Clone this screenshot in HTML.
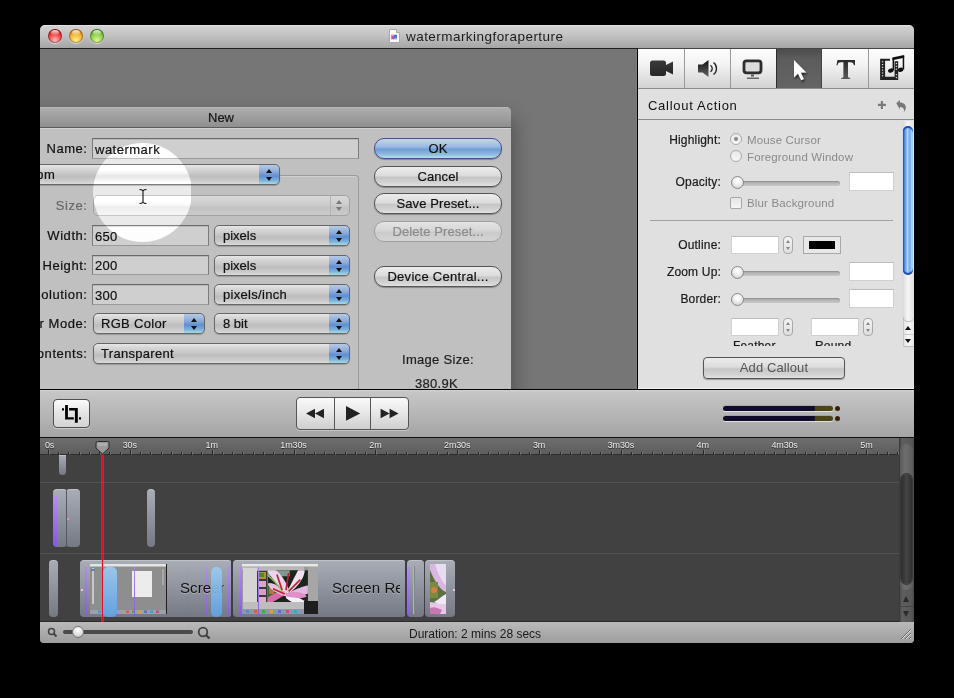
<!DOCTYPE html>
<html><head><meta charset="utf-8">
<style>
*{box-sizing:border-box;margin:0;padding:0}
html,body{width:954px;height:698px;overflow:hidden;background:#000;font-family:"Liberation Sans",sans-serif}
body{will-change:transform}
.a{position:absolute}
.t{position:absolute;white-space:nowrap;font-size:13px;color:#111;line-height:1}
.dl{letter-spacing:.55px}
.dlg .t,.dlg .btn{-webkit-text-stroke:.2px currentColor}
#win{position:absolute;left:40px;top:25px;width:874px;height:618px;border-radius:5px 5px 4px 4px;overflow:hidden;background:#777}
.tl{position:absolute;width:14px;height:14px;border-radius:50%;top:29px;box-shadow:inset 0 0 0 1px rgba(0,0,0,.28),0 1px 1px rgba(255,255,255,.5)}
.tl:after{content:"";position:absolute;left:3px;top:1px;width:8px;height:5px;border-radius:50%;background:linear-gradient(rgba(255,255,255,.85),rgba(255,255,255,.1))}
/* dialog */
.fld{position:absolute;background:#cfcfcf;border:1px solid #7b7b7b;border-top-color:#6a6a6a;border-bottom-color:#9a9a9a;box-shadow:inset 0 1px 0 #b8b8b8}
.pop{position:absolute;height:21px;border-radius:5px;border:1px solid #666;background:linear-gradient(#e6e6e6,#d6d6d6 20%,#c6c6c6 48%,#bcbcbc 58%,#cccccc 85%,#dadada);box-shadow:0 1px 1px rgba(0,0,0,.2);overflow:hidden}
.cap{position:absolute;right:-1px;top:-1px;width:21px;height:21px;border-radius:0 5px 5px 0;border:1px solid #34348a;border-left:0;border-bottom-color:#555;background:linear-gradient(#b6cae6,#8eacd8 35%,#5e8ed2 58%,#7eb2dc 82%,#a6dce2)}
.cap:before{content:"";position:absolute;left:6.5px;top:3.5px;border:3.5px solid transparent;border-bottom:4px solid #111;border-top:0}
.cap:after{content:"";position:absolute;left:6.5px;top:11.5px;border:3.5px solid transparent;border-top:4px solid #111;border-bottom:0}
.btn{position:absolute;height:21px;border-radius:10px;border:1px solid #555;background:linear-gradient(#ececec,#dcdcdc 45%,#c6c6c6 55%,#d4d4d4 85%,#e2e2e2);box-shadow:0 1px 1px rgba(0,0,0,.3);font-size:13px;text-align:center;line-height:19px;color:#111;letter-spacing:.1px;white-space:nowrap}
/* panel */
.lbl{position:absolute;white-space:nowrap;font-size:12px;font-weight:normal;color:#1a1a1a;-webkit-text-stroke:.2px #1a1a1a;text-align:right;line-height:1;letter-spacing:.18px}
.g{color:#8a8a8a}
.wf{position:absolute;background:#fff;border:1px solid #d0d0d0;border-top-color:#bdbdbd}
.sl{position:absolute;height:5px;border-radius:3px;background:linear-gradient(#a8a8a8,#c8c8c8);box-shadow:inset 0 1px 1px rgba(0,0,0,.15)}
.knob{position:absolute;width:13px;height:13px;border-radius:50%;background:radial-gradient(circle at 50% 35%,#fff 0,#f0f0f0 40%,#c8c8c8 100%);border:1px solid #8a8a8a}
.stp{position:absolute;width:10px;height:18px;border:1px solid #a8a8a8;border-radius:4px;background:linear-gradient(#f4f4f4,#dedede)}
.stp:before{content:"";position:absolute;left:2px;top:3px;border:2px solid transparent;border-bottom:3px solid #888;border-top:0}
.stp:after{content:"";position:absolute;left:2px;top:10px;border:2px solid transparent;border-top:3px solid #888;border-bottom:0}
.tab{position:absolute;top:49px;height:39px;background:linear-gradient(#fdfdfd,#f3f3f3 40%,#d2d2d2);border-right:1px solid #9a9a9a}
</style></head>
<body>
<div id="win"></div>

<!-- title bar -->
<div class="a" style="left:40px;top:25px;width:874px;height:23px;border-radius:5px 5px 0 0;background:linear-gradient(#ececec,#d2d2d2 5%,#c2c2c2 45%,#a5a5a5)"></div>
<div class="a" style="left:40px;top:48px;width:874px;height:1px;background:#202020"></div>
<div class="tl" style="left:48px;background:radial-gradient(circle at 50% 80%,#ffc0c0 0,#f04a4a 45%,#c01818 80%,#901010 100%)"></div>
<div class="tl" style="left:69px;background:radial-gradient(circle at 50% 80%,#fff090 0,#f4b030 50%,#d07010 80%,#a05000 100%)"></div>
<div class="tl" style="left:90px;background:radial-gradient(circle at 50% 80%,#e0f8a0 0,#88cc40 50%,#4a9a20 80%,#2a6a10 100%)"></div>
<svg class="a" style="left:388px;top:28px" width="13" height="16" viewBox="0 0 13 16"><path d="M1.5 1.5h7l3 3v10h-10z" fill="#fafafa" stroke="#a8a8a8"/><path d="M8.5 1.5v3h3" fill="#ddd" stroke="#a8a8a8"/><rect x="3" y="6.5" width="6" height="5" fill="#b8a8d8"/><rect x="3.5" y="8" width="3" height="3" fill="#d050a0"/><rect x="6" y="7" width="3" height="3" fill="#5070d0"/></svg>
<div class="t" style="left:406px;top:30px;font-size:13.5px;letter-spacing:.45px;color:#1c1c1c">watermarkingforaperture</div>

<!-- canvas -->
<div class="a" style="left:40px;top:49px;width:597px;height:340px;background:#767676;overflow:hidden">
  <!-- dialog shadow -->
  
  <!-- dialog -->
  <div class="a" style="left:-60px;top:58px;width:531px;height:360px;background:#c0c0c0;border-radius:0 5px 0 0;box-shadow:3px 10px 20px rgba(0,0,0,.32)">
    <div class="a" style="left:0;top:0;width:531px;height:20px;border-radius:0 5px 0 0;background:linear-gradient(#bababa,#acacac 8%,#8f8f8f)"></div>
    <div class="a" style="left:0;top:20px;width:531px;height:1px;background:#5c5c5c"></div>
    <div class="a" style="left:0;top:21px;width:531px;height:1px;background:#d2d2d2"></div>
  </div>
</div>

<!-- dialog contents (page coords), clipped to canvas -->
<div class="a" style="left:40px;top:49px;width:597px;height:340px;overflow:hidden">
 <div class="a dlg" style="left:-40px;top:-49px;width:954px;height:698px">
  <div class="t" style="left:208px;top:111px;color:#151515">New</div>
  <div class="t dl" style="right:866.5px;top:142px">Name:</div>
  <div class="fld" style="left:92px;top:138px;width:267px;height:21px"></div>
  <div class="t" style="left:95px;top:143px;letter-spacing:.5px">watermark</div>

  <!-- group box -->
  <div class="a" style="left:20px;top:175px;width:339px;height:240px;border:1px solid #9a9a9a;border-bottom:0;border-radius:4px 4px 0 0;box-shadow:inset 0 1px 0 #d0d0d0"></div>
  <div class="a" style="left:0px;top:176px;width:281px;height:1px;background:#c0c0c0"></div>
  <div class="pop" style="left:0px;top:164px;width:280px">
    <div class="t" style="left:7px;top:3px;letter-spacing:.4px">Custom</div>
    <div class="cap"></div>
  </div>

  <div class="t dl" style="right:866.5px;top:199px;color:#686868">Size:</div>
  <div class="a" style="left:93px;top:195px;width:257px;height:21px;border-radius:5px;border:1px solid #a2a2a2;background:linear-gradient(#d8d8d8,#cdcdcd 45%,#c2c2c2 58%,#cacaca)"></div>
  <div class="a" style="left:330px;top:196px;width:1px;height:19px;background:#b2b2b2"></div>
  <div class="a" style="left:335.5px;top:199.5px;border:3.5px solid transparent;border-bottom:4px solid #7a7a7a;border-top:0"></div>
  <div class="a" style="left:335.5px;top:207px;border:3.5px solid transparent;border-top:4px solid #7a7a7a;border-bottom:0"></div>

  <div class="t dl" style="right:866.5px;top:229px">Width:</div>
  <div class="fld" style="left:92px;top:225px;width:117px;height:21px"></div>
  <div class="t" style="left:95px;top:230px;letter-spacing:.3px">650</div>
  <div class="pop" style="left:214px;top:225px;width:136px"><div class="t" style="left:8px;top:3px">pixels</div><div class="cap"></div></div>

  <div class="t dl" style="right:866.5px;top:259px">Height:</div>
  <div class="fld" style="left:92px;top:255px;width:117px;height:20px"></div>
  <div class="t" style="left:95px;top:259px;letter-spacing:.3px">200</div>
  <div class="pop" style="left:214px;top:255px;width:136px"><div class="t" style="left:8px;top:3px">pixels</div><div class="cap"></div></div>

  <div class="t dl" style="right:866.5px;top:288px">Resolution:</div>
  <div class="fld" style="left:92px;top:284px;width:117px;height:21px"></div>
  <div class="t" style="left:95px;top:289px;letter-spacing:.3px">300</div>
  <div class="pop" style="left:214px;top:284px;width:136px"><div class="t" style="left:8px;top:3px;letter-spacing:.3px">pixels/inch</div><div class="cap"></div></div>

  <div class="t dl" style="right:866.5px;top:317px">Color Mode:</div>
  <div class="pop" style="left:93px;top:313px;width:112px"><div class="t" style="left:7px;top:3px;letter-spacing:.3px">RGB Color</div><div class="cap"></div></div>
  <div class="pop" style="left:214px;top:313px;width:136px"><div class="t" style="left:8px;top:3px">8 bit</div><div class="cap"></div></div>

  <div class="t dl" style="right:866.5px;top:347px">Background Contents:</div>
  <div class="pop" style="left:93px;top:343px;width:257px"><div class="t" style="left:7px;top:3px;letter-spacing:.3px">Transparent</div><div class="cap"></div></div>

  <!-- right buttons -->
  <div class="btn" style="left:374px;top:138px;width:128px;border-color:#4a4f86;background:linear-gradient(#c6d6ee,#9cb9e2 40%,#729ed6 55%,#8cb8e0 80%,#b4e0ee)">OK</div>
  <div class="btn" style="left:374px;top:166px;width:128px">Cancel</div>
  <div class="btn" style="left:374px;top:193px;width:128px">Save Preset...</div>
  <div class="btn" style="left:374px;top:221px;width:128px;color:#8c8c8c;border-color:#a0a0a0;box-shadow:none;background:linear-gradient(#e4e4e4,#d6d6d6 45%,#cbcbcb 55%,#d4d4d4)">Delete Preset...</div>
  <div class="btn" style="left:374px;top:266px;width:128px;letter-spacing:.3px">Device Central...</div>
  <div class="t" style="left:402px;top:353px;color:#222;letter-spacing:.3px">Image Size:</div>
  <div class="t" style="left:415px;top:377px;color:#222;letter-spacing:.3px">380.9K</div>

  <!-- mouse highlight -->
  <div class="a" style="left:93px;top:143px;width:99px;height:99px;border-radius:50%;backdrop-filter:brightness(1.22)"></div>
  <svg class="a" style="left:138px;top:188px" width="10" height="17" viewBox="0 0 10 17"><path d="M1.5 1.5c1.5 0 2.5.3 3.5 1.2 1-.9 2-1.2 3.5-1.2M5 2.7v11.6M1.5 15.5c1.5 0 2.5-.3 3.5-1.2 1 .9 2 1.2 3.5 1.2" fill="none" stroke="#111" stroke-width="1.1"/></svg>
 </div>
</div>

<!-- right panel -->
<div class="a" style="left:637px;top:49px;width:1px;height:340px;background:#000"></div>
<div class="a" style="left:636px;top:49px;width:1px;height:340px;background:#7e7e7e"></div>
<div class="a" style="left:638px;top:48px;width:276px;height:1px;background:#454545"></div>
<div class="a" style="left:638px;top:49px;width:276px;height:340px;background:#e0e0e0;overflow:hidden">
</div>
<div class="tab" style="left:638px;width:47px"></div>
<div class="tab" style="left:685px;width:46px"></div>
<div class="tab" style="left:731px;width:46px"></div>
<div class="tab" style="left:776px;width:46px;background:linear-gradient(#4c4c4c,#5c5c5c 25%,#646464);border-left:1px solid #2e2e2e;border-right:1px solid #444"></div>
<div class="tab" style="left:822px;width:47px"></div>
<div class="tab" style="left:869px;width:45px;border-right:0"></div>
<div class="a" style="left:638px;top:88px;width:276px;height:1px;background:#8c8c8c"></div>
<svg class="a" style="left:638px;top:49px" width="276" height="39" viewBox="0 0 276 39">
<defs>
<linearGradient id="dk" x1="0" y1="0" x2="0" y2="1"><stop offset="0" stop-color="#3a3a3a"/><stop offset="1" stop-color="#262626"/></linearGradient>
<linearGradient id="sp" x1="0" y1="0" x2="0" y2="1"><stop offset="0" stop-color="#111"/><stop offset="1" stop-color="#666"/></linearGradient>
<linearGradient id="tg" x1="0" y1="0" x2="0" y2="1"><stop offset="0" stop-color="#2a2a2a"/><stop offset="1" stop-color="#5a5a5a"/></linearGradient>
<filter id="sh" x="-50%" y="-50%" width="200%" height="200%"><feGaussianBlur in="SourceAlpha" stdDeviation="1"/><feOffset dx="1" dy="1.5"/><feComponentTransfer><feFuncA type="linear" slope=".7"/></feComponentTransfer><feMerge><feMergeNode/><feMergeNode in="SourceGraphic"/></feMerge></filter>
</defs>
<!-- camera -->
<rect x="12" y="11.5" width="16" height="15.5" rx="2.5" fill="url(#dk)"/>
<path d="M27 16.5L35 12.5v13L27 21.5z" fill="url(#dk)"/>
<!-- speaker -->
<path d="M60 15.5h4.5l6-4.5v17l-6-4.5H60z" fill="url(#sp)"/>
<path d="M72.5 16.2a4 4 0 0 1 0 6.6" fill="none" stroke="#222" stroke-width="1.3"/>
<path d="M75.5 13.5a7.5 7.5 0 0 1 0 12" fill="none" stroke="#222" stroke-width="1.3"/>
<!-- monitor -->
<rect x="106" y="11.8" width="17" height="12" rx="2.5" fill="#dcdcdc" stroke="#2e2e2e" stroke-width="2.8"/>
<path d="M113 25.5h3v2h-3z" fill="#555"/>
<path d="M109 28.5h12v1.5h-12z" fill="#666"/>
<!-- arrow -->
<path d="M156 11v17.5l4-4 3.2 6.8 2.6-1.2-3.1-6.6h5.6z" fill="#fff" filter="url(#sh)"/>
<!-- T -->
<path d="M199.5 11h17.5v5.2h-1.2c-.4-2.2-1-3-3.4-3h-2.4v14c0 1.2.4 1.6 2.2 1.7v1.1h-9v-1.1c1.8-.1 2.2-.5 2.2-1.7v-14h-2.4c-2.4 0-3 .8-3.4 3h-1.2z" fill="url(#tg)"/>
<!-- film/music -->
<path d="M242.1 9.8h9.9v2h-4.9v16h9.5V12.3h3.6v18.6h-18.1z" fill="#222"/>
<g fill="#e8e8e8"><rect x="243.9" y="12.2" width="1.3" height="1.1"/><rect x="243.9" y="15" width="1.3" height="1.1"/><rect x="243.9" y="17.8" width="1.3" height="1.1"/><rect x="243.9" y="20.6" width="1.3" height="1.1"/><rect x="243.9" y="23.4" width="1.3" height="1.1"/><rect x="243.9" y="26.2" width="1.3" height="1.1"/><rect x="257.8" y="14" width="1.3" height="1.1"/><rect x="257.8" y="16.8" width="1.3" height="1.1"/><rect x="257.8" y="19.6" width="1.3" height="1.1"/><rect x="257.8" y="25.2" width="1.3" height="1.1"/><rect x="257.8" y="28" width="1.3" height="1.1"/></g>
<path d="M254.3 8.6L266.2 6v2.7L254.3 11.3z" fill="#111"/>
<path d="M254.6 9.5h1.5v12h-1.5zM264.7 7h1.5v13.6h-1.5z" fill="#111"/>
<ellipse cx="252.7" cy="21.6" rx="2.7" ry="2.1" transform="rotate(-20 252.7 21.6)" fill="#111"/>
<ellipse cx="262.6" cy="20.8" rx="2.7" ry="2.1" transform="rotate(-20 262.6 20.8)" fill="#111"/>
</svg>

<!-- header -->
<div class="t" style="left:648px;top:99px;font-size:13px;letter-spacing:.72px;color:#111">Callout Action</div>
<div class="a" style="left:638px;top:119px;width:276px;height:1px;background:#8a8a8a"></div>
<svg class="a" style="left:870px;top:94px" width="42" height="22" viewBox="0 0 42 22"><path d="M7.9 10.9h8M11.9 6.9v8" stroke="#787878" stroke-width="2.1"/><path d="M26.3 9.3l3.6-3.2v2.3c3.5.1 6 1.9 6 5 0 2-1.2 3.4-1.8 4.4l-.3-.1c.5-1.5.3-3-.8-3.8-.9-.7-1.9-.9-3.1-.8v2.5z" fill="#787878"/></svg>


<div class="lbl" style="right:233px;top:134px">Highlight:</div>
<div class="a" style="left:730px;top:133px;width:12px;height:12px;border-radius:50%;border:1px solid #a8a8a8;background:linear-gradient(#e8e8e8,#f8f8f8)"><div class="a" style="left:3px;top:3px;width:4px;height:4px;border-radius:50%;background:#888"></div></div>
<div class="t g" style="left:747px;top:135px;font-size:11.5px;letter-spacing:.15px">Mouse Cursor</div>
<div class="a" style="left:730px;top:150px;width:12px;height:12px;border-radius:50%;border:1px solid #a8a8a8;background:linear-gradient(#e8e8e8,#f8f8f8)"></div>
<div class="t g" style="left:747px;top:152px;font-size:11.5px;letter-spacing:.15px">Foreground Window</div>

<div class="lbl" style="right:233px;top:176px">Opacity:</div>
<div class="sl" style="left:731px;top:181px;width:109px"></div>
<div class="knob" style="left:731px;top:176px"></div>
<div class="wf" style="left:849px;top:172px;width:45px;height:19px"></div>
<div class="a" style="left:730px;top:197px;width:12px;height:12px;border:1px solid #a8a8a8;border-radius:2px;background:linear-gradient(#e4e4e4,#f6f6f6)"></div>
<div class="t g" style="left:747px;top:198px;font-size:11.5px;letter-spacing:.15px">Blur Background</div>
<div class="a" style="left:650px;top:220px;width:243px;height:1px;background:#a0a0a0"></div>

<div class="lbl" style="right:233px;top:239px">Outline:</div>
<div class="wf" style="left:731px;top:236px;width:48px;height:18px"></div>
<div class="stp" style="left:783px;top:236px"></div>
<div class="a" style="left:803px;top:236px;width:38px;height:18px;border:1px solid #a8a8a8;background:#e8e8e8"><div class="a" style="left:5px;top:4px;width:26px;height:8px;background:#000"></div></div>

<div class="lbl" style="right:233px;top:266px">Zoom Up:</div>
<div class="sl" style="left:731px;top:271px;width:109px"></div>
<div class="knob" style="left:731px;top:266px"></div>
<div class="wf" style="left:849px;top:262px;width:45px;height:19px"></div>

<div class="lbl" style="right:233px;top:293px">Border:</div>
<div class="sl" style="left:731px;top:298px;width:109px"></div>
<div class="knob" style="left:731px;top:293px"></div>
<div class="wf" style="left:849px;top:289px;width:45px;height:19px"></div>

<div class="wf" style="left:731px;top:318px;width:48px;height:18px"></div>
<div class="stp" style="left:783px;top:318px"></div>
<div class="wf" style="left:811px;top:318px;width:48px;height:18px"></div>
<div class="stp" style="left:863px;top:318px"></div>
<div class="a" style="left:700px;top:330px;width:200px;height:16px;overflow:hidden">
  <div class="lbl" style="left:33px;top:10px">Feather</div>
  <div class="lbl" style="left:115px;top:10px">Round</div>
</div>
<!-- scrollbar -->
<div class="a" style="left:903px;top:121px;width:11px;height:226px;background:linear-gradient(90deg,#e4e4e4,#f8f8f8 50%,#e8e8e8);border-left:1px solid #c8c8c8;border-bottom:1px solid #bbb"></div>
<div class="a" style="left:903px;top:121px;width:11px;height:200px;border-radius:0 0 6px 6px;background:linear-gradient(90deg,#dcdcdc,#f6f6f6 45%,#e0e0e0);box-shadow:0 1px 1px rgba(0,0,0,.25)"></div>
<div class="a" style="left:903px;top:126px;width:10px;height:149px;border-radius:5px;background:linear-gradient(90deg,#1f4fc0,#5a94e8 20%,#a8d4fa 45%,#6aa8f0 70%,#b8f0ff 95%);box-shadow:inset 0 2px 1px #1e46b0,inset 0 -2px 1px #1e46b0"></div>
<div class="a" style="left:904px;top:334px;width:10px;height:1px;background:#c8c8c8"></div>
<div class="a" style="left:905px;top:326px;border:3.5px solid transparent;border-bottom:4.5px solid #111;border-top:0"></div>
<div class="a" style="left:905px;top:339px;border:3.5px solid transparent;border-top:4.5px solid #111;border-bottom:0"></div>

<div class="btn" style="left:703px;top:357px;width:142px;height:22px;border-radius:4px;color:#555;font-size:13px">Add Callout</div>
<div class="a" style="left:638px;top:388px;width:276px;height:1px;background:#f4f4f4"></div>

<!-- separator & toolbar -->
<div class="a" style="left:40px;top:389px;width:874px;height:1px;background:#000"></div>
<div class="a" style="left:40px;top:390px;width:874px;height:47px;background:linear-gradient(#d4d4d4,#c6c6c6 4%,#b3b3b3 60%,#a4a4a4)"></div>
<div class="a" style="left:40px;top:437px;width:874px;height:1px;background:#111"></div>
<!-- crop button -->
<div class="a" style="left:53px;top:399px;width:37px;height:29px;border-radius:4px;border:1px solid #4e4e4e;background:linear-gradient(#fbfbfb,#e4e4e4 50%,#d4d4d4);box-shadow:0 1px 0 rgba(255,255,255,.4)"></div>
<svg class="a" style="left:55px;top:400px" width="30" height="26" viewBox="0 0 30 26"><path d="M7 8.2h2v2.4H7zM10.1 5h2.8v12.3h5.9v2.3h-8.7zM14.1 8h8.7v14.8h-2.9V10.6h-5.8zM24 17.3h2v2.3h-2z" fill="#000"/></svg>
<!-- transport -->
<div class="a" style="left:296px;top:397px;width:113px;height:33px;border-radius:4px;border:1px solid #555;background:linear-gradient(#fafafa,#e6e6e6 50%,#cfcfcf);box-shadow:0 1px 0 rgba(255,255,255,.35)"></div>
<div class="a" style="left:334px;top:398px;width:1px;height:31px;background:#555"></div>
<div class="a" style="left:370px;top:398px;width:1px;height:31px;background:#555"></div>
<svg class="a" style="left:300px;top:400px" width="105" height="27" viewBox="0 0 105 27"><path d="M6 13.5L15 8.8v9.4zM15 13.5L24 8.8v9.4z" fill="#222"/><path d="M46 6v14.7L60.2 13.4z" fill="#222"/><path d="M80.6 8.8L89.6 13.5 80.6 18.2zM89.6 8.8L98.6 13.5 89.6 18.2z" fill="#222"/></svg>
<!-- audio meter -->
<div class="a" style="left:723px;top:406px;width:110px;height:5px;border-radius:3px;background:linear-gradient(90deg,#120c2c 83%,#4a4418 84%);box-shadow:0 1px 0 rgba(255,255,255,.6),0 -1px 0 rgba(0,0,0,.1)"></div>
<div class="a" style="left:723px;top:416px;width:110px;height:5px;border-radius:3px;background:linear-gradient(90deg,#120c2c 83%,#4a4418 84%);box-shadow:0 1px 0 rgba(255,255,255,.6),0 -1px 0 rgba(0,0,0,.1)"></div>
<div class="a" style="left:835px;top:406px;width:5px;height:5px;border-radius:50%;background:#3a2200"></div>
<div class="a" style="left:835px;top:416px;width:5px;height:5px;border-radius:50%;background:#3a2000"></div>

<!-- ruler -->
<div class="a" style="left:40px;top:438px;width:874px;height:17px;background:linear-gradient(#6e6e6e,#5c5c5c)"></div>
<div class="a" style="left:40px;top:454px;width:874px;height:1px;background:#2e2e2e"></div>
<svg class="a" style="left:40px;top:438px" width="859" height="17" viewBox="0 0 859 17"><path d="M8.5 12v5" stroke="#262626"/><path d="M9.5 12v5" stroke="#8a8a8a" stroke-opacity=".5"/><path d="M18.5 14v3" stroke="#262626"/><path d="M19.5 14v3" stroke="#8a8a8a" stroke-opacity=".5"/><path d="M28.5 14v3" stroke="#262626"/><path d="M29.5 14v3" stroke="#8a8a8a" stroke-opacity=".5"/><path d="M39.5 14v3" stroke="#262626"/><path d="M40.5 14v3" stroke="#8a8a8a" stroke-opacity=".5"/><path d="M49.5 14v3" stroke="#262626"/><path d="M50.5 14v3" stroke="#8a8a8a" stroke-opacity=".5"/><path d="M59.5 14v3" stroke="#262626"/><path d="M60.5 14v3" stroke="#8a8a8a" stroke-opacity=".5"/><path d="M69.5 14v3" stroke="#262626"/><path d="M70.5 14v3" stroke="#8a8a8a" stroke-opacity=".5"/><path d="M80.5 14v3" stroke="#262626"/><path d="M81.5 14v3" stroke="#8a8a8a" stroke-opacity=".5"/><path d="M90.5 12v5" stroke="#262626"/><path d="M91.5 12v5" stroke="#8a8a8a" stroke-opacity=".5"/><path d="M100.5 14v3" stroke="#262626"/><path d="M101.5 14v3" stroke="#8a8a8a" stroke-opacity=".5"/><path d="M110.5 14v3" stroke="#262626"/><path d="M111.5 14v3" stroke="#8a8a8a" stroke-opacity=".5"/><path d="M121.5 14v3" stroke="#262626"/><path d="M122.5 14v3" stroke="#8a8a8a" stroke-opacity=".5"/><path d="M131.5 14v3" stroke="#262626"/><path d="M132.5 14v3" stroke="#8a8a8a" stroke-opacity=".5"/><path d="M141.5 14v3" stroke="#262626"/><path d="M142.5 14v3" stroke="#8a8a8a" stroke-opacity=".5"/><path d="M151.5 14v3" stroke="#262626"/><path d="M152.5 14v3" stroke="#8a8a8a" stroke-opacity=".5"/><path d="M161.5 14v3" stroke="#262626"/><path d="M162.5 14v3" stroke="#8a8a8a" stroke-opacity=".5"/><path d="M172.5 12v5" stroke="#262626"/><path d="M173.5 12v5" stroke="#8a8a8a" stroke-opacity=".5"/><path d="M182.5 14v3" stroke="#262626"/><path d="M183.5 14v3" stroke="#8a8a8a" stroke-opacity=".5"/><path d="M192.5 14v3" stroke="#262626"/><path d="M193.5 14v3" stroke="#8a8a8a" stroke-opacity=".5"/><path d="M202.5 14v3" stroke="#262626"/><path d="M203.5 14v3" stroke="#8a8a8a" stroke-opacity=".5"/><path d="M213.5 14v3" stroke="#262626"/><path d="M214.5 14v3" stroke="#8a8a8a" stroke-opacity=".5"/><path d="M223.5 14v3" stroke="#262626"/><path d="M224.5 14v3" stroke="#8a8a8a" stroke-opacity=".5"/><path d="M233.5 14v3" stroke="#262626"/><path d="M234.5 14v3" stroke="#8a8a8a" stroke-opacity=".5"/><path d="M243.5 14v3" stroke="#262626"/><path d="M244.5 14v3" stroke="#8a8a8a" stroke-opacity=".5"/><path d="M254.5 12v5" stroke="#262626"/><path d="M255.5 12v5" stroke="#8a8a8a" stroke-opacity=".5"/><path d="M264.5 14v3" stroke="#262626"/><path d="M265.5 14v3" stroke="#8a8a8a" stroke-opacity=".5"/><path d="M274.5 14v3" stroke="#262626"/><path d="M275.5 14v3" stroke="#8a8a8a" stroke-opacity=".5"/><path d="M284.5 14v3" stroke="#262626"/><path d="M285.5 14v3" stroke="#8a8a8a" stroke-opacity=".5"/><path d="M294.5 14v3" stroke="#262626"/><path d="M295.5 14v3" stroke="#8a8a8a" stroke-opacity=".5"/><path d="M305.5 14v3" stroke="#262626"/><path d="M306.5 14v3" stroke="#8a8a8a" stroke-opacity=".5"/><path d="M315.5 14v3" stroke="#262626"/><path d="M316.5 14v3" stroke="#8a8a8a" stroke-opacity=".5"/><path d="M325.5 14v3" stroke="#262626"/><path d="M326.5 14v3" stroke="#8a8a8a" stroke-opacity=".5"/><path d="M335.5 12v5" stroke="#262626"/><path d="M336.5 12v5" stroke="#8a8a8a" stroke-opacity=".5"/><path d="M346.5 14v3" stroke="#262626"/><path d="M347.5 14v3" stroke="#8a8a8a" stroke-opacity=".5"/><path d="M356.5 14v3" stroke="#262626"/><path d="M357.5 14v3" stroke="#8a8a8a" stroke-opacity=".5"/><path d="M366.5 14v3" stroke="#262626"/><path d="M367.5 14v3" stroke="#8a8a8a" stroke-opacity=".5"/><path d="M376.5 14v3" stroke="#262626"/><path d="M377.5 14v3" stroke="#8a8a8a" stroke-opacity=".5"/><path d="M387.5 14v3" stroke="#262626"/><path d="M388.5 14v3" stroke="#8a8a8a" stroke-opacity=".5"/><path d="M397.5 14v3" stroke="#262626"/><path d="M398.5 14v3" stroke="#8a8a8a" stroke-opacity=".5"/><path d="M407.5 14v3" stroke="#262626"/><path d="M408.5 14v3" stroke="#8a8a8a" stroke-opacity=".5"/><path d="M417.5 12v5" stroke="#262626"/><path d="M418.5 12v5" stroke="#8a8a8a" stroke-opacity=".5"/><path d="M427.5 14v3" stroke="#262626"/><path d="M428.5 14v3" stroke="#8a8a8a" stroke-opacity=".5"/><path d="M438.5 14v3" stroke="#262626"/><path d="M439.5 14v3" stroke="#8a8a8a" stroke-opacity=".5"/><path d="M448.5 14v3" stroke="#262626"/><path d="M449.5 14v3" stroke="#8a8a8a" stroke-opacity=".5"/><path d="M458.5 14v3" stroke="#262626"/><path d="M459.5 14v3" stroke="#8a8a8a" stroke-opacity=".5"/><path d="M468.5 14v3" stroke="#262626"/><path d="M469.5 14v3" stroke="#8a8a8a" stroke-opacity=".5"/><path d="M479.5 14v3" stroke="#262626"/><path d="M480.5 14v3" stroke="#8a8a8a" stroke-opacity=".5"/><path d="M489.5 14v3" stroke="#262626"/><path d="M490.5 14v3" stroke="#8a8a8a" stroke-opacity=".5"/><path d="M499.5 12v5" stroke="#262626"/><path d="M500.5 12v5" stroke="#8a8a8a" stroke-opacity=".5"/><path d="M509.5 14v3" stroke="#262626"/><path d="M510.5 14v3" stroke="#8a8a8a" stroke-opacity=".5"/><path d="M520.5 14v3" stroke="#262626"/><path d="M521.5 14v3" stroke="#8a8a8a" stroke-opacity=".5"/><path d="M530.5 14v3" stroke="#262626"/><path d="M531.5 14v3" stroke="#8a8a8a" stroke-opacity=".5"/><path d="M540.5 14v3" stroke="#262626"/><path d="M541.5 14v3" stroke="#8a8a8a" stroke-opacity=".5"/><path d="M550.5 14v3" stroke="#262626"/><path d="M551.5 14v3" stroke="#8a8a8a" stroke-opacity=".5"/><path d="M560.5 14v3" stroke="#262626"/><path d="M561.5 14v3" stroke="#8a8a8a" stroke-opacity=".5"/><path d="M571.5 14v3" stroke="#262626"/><path d="M572.5 14v3" stroke="#8a8a8a" stroke-opacity=".5"/><path d="M581.5 12v5" stroke="#262626"/><path d="M582.5 12v5" stroke="#8a8a8a" stroke-opacity=".5"/><path d="M591.5 14v3" stroke="#262626"/><path d="M592.5 14v3" stroke="#8a8a8a" stroke-opacity=".5"/><path d="M601.5 14v3" stroke="#262626"/><path d="M602.5 14v3" stroke="#8a8a8a" stroke-opacity=".5"/><path d="M612.5 14v3" stroke="#262626"/><path d="M613.5 14v3" stroke="#8a8a8a" stroke-opacity=".5"/><path d="M622.5 14v3" stroke="#262626"/><path d="M623.5 14v3" stroke="#8a8a8a" stroke-opacity=".5"/><path d="M632.5 14v3" stroke="#262626"/><path d="M633.5 14v3" stroke="#8a8a8a" stroke-opacity=".5"/><path d="M642.5 14v3" stroke="#262626"/><path d="M643.5 14v3" stroke="#8a8a8a" stroke-opacity=".5"/><path d="M652.5 14v3" stroke="#262626"/><path d="M653.5 14v3" stroke="#8a8a8a" stroke-opacity=".5"/><path d="M663.5 12v5" stroke="#262626"/><path d="M664.5 12v5" stroke="#8a8a8a" stroke-opacity=".5"/><path d="M673.5 14v3" stroke="#262626"/><path d="M674.5 14v3" stroke="#8a8a8a" stroke-opacity=".5"/><path d="M683.5 14v3" stroke="#262626"/><path d="M684.5 14v3" stroke="#8a8a8a" stroke-opacity=".5"/><path d="M693.5 14v3" stroke="#262626"/><path d="M694.5 14v3" stroke="#8a8a8a" stroke-opacity=".5"/><path d="M704.5 14v3" stroke="#262626"/><path d="M705.5 14v3" stroke="#8a8a8a" stroke-opacity=".5"/><path d="M714.5 14v3" stroke="#262626"/><path d="M715.5 14v3" stroke="#8a8a8a" stroke-opacity=".5"/><path d="M724.5 14v3" stroke="#262626"/><path d="M725.5 14v3" stroke="#8a8a8a" stroke-opacity=".5"/><path d="M734.5 14v3" stroke="#262626"/><path d="M735.5 14v3" stroke="#8a8a8a" stroke-opacity=".5"/><path d="M745.5 12v5" stroke="#262626"/><path d="M746.5 12v5" stroke="#8a8a8a" stroke-opacity=".5"/><path d="M755.5 14v3" stroke="#262626"/><path d="M756.5 14v3" stroke="#8a8a8a" stroke-opacity=".5"/><path d="M765.5 14v3" stroke="#262626"/><path d="M766.5 14v3" stroke="#8a8a8a" stroke-opacity=".5"/><path d="M775.5 14v3" stroke="#262626"/><path d="M776.5 14v3" stroke="#8a8a8a" stroke-opacity=".5"/><path d="M785.5 14v3" stroke="#262626"/><path d="M786.5 14v3" stroke="#8a8a8a" stroke-opacity=".5"/><path d="M796.5 14v3" stroke="#262626"/><path d="M797.5 14v3" stroke="#8a8a8a" stroke-opacity=".5"/><path d="M806.5 14v3" stroke="#262626"/><path d="M807.5 14v3" stroke="#8a8a8a" stroke-opacity=".5"/><path d="M816.5 14v3" stroke="#262626"/><path d="M817.5 14v3" stroke="#8a8a8a" stroke-opacity=".5"/><path d="M826.5 12v5" stroke="#262626"/><path d="M827.5 12v5" stroke="#8a8a8a" stroke-opacity=".5"/><path d="M837.5 14v3" stroke="#262626"/><path d="M838.5 14v3" stroke="#8a8a8a" stroke-opacity=".5"/><path d="M847.5 14v3" stroke="#262626"/><path d="M848.5 14v3" stroke="#8a8a8a" stroke-opacity=".5"/><path d="M857.5 14v3" stroke="#262626"/><path d="M858.5 14v3" stroke="#8a8a8a" stroke-opacity=".5"/></svg>
<div class="t" style="left:45px;top:441px;font-size:9px;letter-spacing:-.15px;color:#ececec;text-shadow:0 1px 1px #222">0s</div><div class="t" style="left:89.8px;width:80px;text-align:center;top:441px;font-size:9px;letter-spacing:-.15px;color:#ececec;text-shadow:0 1px 1px #222">30s</div><div class="t" style="left:171.7px;width:80px;text-align:center;top:441px;font-size:9px;letter-spacing:-.15px;color:#ececec;text-shadow:0 1px 1px #222">1m</div><div class="t" style="left:253.5px;width:80px;text-align:center;top:441px;font-size:9px;letter-spacing:-.15px;color:#ececec;text-shadow:0 1px 1px #222">1m30s</div><div class="t" style="left:335.4px;width:80px;text-align:center;top:441px;font-size:9px;letter-spacing:-.15px;color:#ececec;text-shadow:0 1px 1px #222">2m</div><div class="t" style="left:417.2px;width:80px;text-align:center;top:441px;font-size:9px;letter-spacing:-.15px;color:#ececec;text-shadow:0 1px 1px #222">2m30s</div><div class="t" style="left:499.0px;width:80px;text-align:center;top:441px;font-size:9px;letter-spacing:-.15px;color:#ececec;text-shadow:0 1px 1px #222">3m</div><div class="t" style="left:580.9px;width:80px;text-align:center;top:441px;font-size:9px;letter-spacing:-.15px;color:#ececec;text-shadow:0 1px 1px #222">3m30s</div><div class="t" style="left:662.7px;width:80px;text-align:center;top:441px;font-size:9px;letter-spacing:-.15px;color:#ececec;text-shadow:0 1px 1px #222">4m</div><div class="t" style="left:744.6px;width:80px;text-align:center;top:441px;font-size:9px;letter-spacing:-.15px;color:#ececec;text-shadow:0 1px 1px #222">4m30s</div><div class="t" style="left:826.4px;width:80px;text-align:center;top:441px;font-size:9px;letter-spacing:-.15px;color:#ececec;text-shadow:0 1px 1px #222">5m</div>

<!-- tracks -->
<div class="a" style="left:40px;top:455px;width:874px;height:166px;background:#414141"></div>
<div class="a" style="left:40px;top:482px;width:863px;height:1px;background:#525252"></div>
<div class="a" style="left:40px;top:553px;width:863px;height:1px;background:#525252"></div>
<div class="a" style="left:40px;top:621px;width:874px;height:1px;background:#2a2a2a"></div>

<!-- clips -->
<style>
.clip{position:absolute;border-radius:4px;background:linear-gradient(#a9adb6,#8f939d 50%,#757984);box-shadow:inset 0 1px 0 rgba(255,255,255,.25)}
.pur{position:absolute;width:2px;background:linear-gradient(#b08af0,#8a5ae8)}
.blu{position:absolute;border-radius:5px;background:linear-gradient(#9ccaf0,#5fa2e4);opacity:.92}
</style>
<div class="clip" style="left:59px;top:455px;width:7px;height:20px;border-radius:0 0 4px 4px"></div>
<div class="clip" style="left:53px;top:489px;width:14px;height:58px"></div>
<div class="clip" style="left:66px;top:489px;width:14px;height:58px"></div>
<div class="a" style="left:66px;top:489px;width:1px;height:58px;background:#55585f"></div>
<div class="a" style="left:53px;top:496px;width:4px;height:50px;border-radius:0 0 0 3px;background:linear-gradient(#b58cf2,#8a55e6)"></div>
<div class="a" style="left:67px;top:518px;width:2px;height:2px;background:#f090b0"></div>
<div class="clip" style="left:147px;top:489px;width:8px;height:58px"></div>

<div class="clip" style="left:49px;top:560px;width:9px;height:57px"></div>
<div class="clip" style="left:80px;top:560px;width:152px;height:57px"></div>
<div class="clip" style="left:233px;top:560px;width:173px;height:57px"></div>
<div class="clip" style="left:407px;top:560px;width:17px;height:57px"></div>
<div class="clip" style="left:425px;top:560px;width:30px;height:57px"></div>
<!-- thumb 1 -->
<svg class="a" style="left:90px;top:564px" width="77" height="50" viewBox="0 0 77 50">
<rect width="76" height="50" fill="#8e8e8e"/>
<rect width="76" height="2" fill="#e4e4e4"/>
<rect y="2" width="76" height="1" fill="#bcbcbc"/>
<rect x="2" y="4" width="2" height="36" fill="#c8c8c8"/>
<rect x="1.5" y="5" width="3" height="2" fill="#4a7ad0"/>
<rect x="42" y="7" width="20" height="26" fill="#ececec"/>
<rect x="72" y="5" width="2" height="16" fill="#a8a8a8"/>
<rect x="0" y="46" width="76" height="4" fill="#9aa0aa"/>
<g><rect x="8" y="46.5" width="3" height="2.5" fill="#5a8ad0"/><rect x="16" y="46.5" width="3" height="2.5" fill="#707070"/><rect x="36" y="46.5" width="3" height="2.5" fill="#d06040"/><rect x="42" y="46.5" width="3" height="2.5" fill="#50a060"/><rect x="48" y="46.5" width="3" height="2.5" fill="#e0a040"/><rect x="54" y="46.5" width="3" height="2.5" fill="#6070c0"/><rect x="60" y="46.5" width="3" height="2.5" fill="#40a0d0"/><rect x="66" y="46.5" width="3" height="2.5" fill="#c05080"/></g>
<rect x="76" y="0" width="1" height="50" fill="#1e1e1e"/>
</svg>
<div class="pur" style="left:85px;top:567px;height:49px"></div>
<div class="a" style="left:81px;top:589px;width:2px;height:2px;background:#f4c0e0"></div>
<div class="pur" style="left:116px;top:580px;height:36px;width:1px"></div>
<div class="pur" style="left:134px;top:567px;height:49px;width:1px"></div>
<div class="pur" style="left:187px;top:567px;height:49px;width:1px"></div>
<div class="pur" style="left:206px;top:567px;height:49px;width:1px"></div>
<div class="pur" style="left:228px;top:567px;height:49px;width:1px"></div>
<div class="t" style="left:180px;top:580px;font-size:15px;color:#111;text-shadow:0 1px 0 rgba(255,255,255,.3);letter-spacing:.1px;width:44px;overflow:hidden">Screen Recording</div>
<div class="blu" style="left:103px;top:567px;width:14px;height:50px"></div>
<div class="blu" style="left:211px;top:567px;width:11px;height:50px"></div>
<div class="a" style="left:231px;top:560px;width:2px;height:57px;background:#3c3e44"></div>
<!-- thumb 2 -->
<svg class="a" style="left:242px;top:564px" width="76" height="50" viewBox="0 0 76 50">
<defs>
<clipPath id="ph"><rect x="25.7" y="6.3" width="40.2" height="31.8"/></clipPath>
</defs>
<rect width="76" height="50" fill="#9a9a9a"/>
<rect width="76" height="2.5" fill="#e8e8e8"/>
<rect x="0" y="3" width="62" height="3" fill="#b8b8b8"/>
<rect x="1" y="4" width="14" height="40" fill="#d4d4d4"/>
<rect x="15" y="7" width="10" height="34" fill="#3a3a3a"/>
<rect x="16" y="8" width="8" height="7" fill="#b89030"/><rect x="17" y="9" width="5" height="4" fill="#4a8a30"/>
<rect x="16" y="17" width="8" height="6" fill="#d8a8c8"/>
<rect x="16" y="25" width="8" height="6" fill="#d8a0c0"/>
<rect x="16" y="33" width="8" height="6" fill="#d8b0c8"/>
<rect x="25.7" y="6.3" width="40.2" height="31.8" fill="#1c2420"/>
<rect x="25.7" y="6.3" width="22" height="6" fill="#809890"/>
<rect x="25.7" y="20" width="8" height="14" fill="#3a6a30"/>
<rect x="27" y="24" width="5" height="6" fill="#c07040"/>
<g clip-path="url(#ph)"><g transform="translate(44 30) scale(1.3)">
<path d="M0 0C-6 -6 -14 -16 -17 -22 -10 -22 -3 -16 2 -4z" fill="#ecd4ec"/>
<path d="M0 0C4 -8 10 -20 12 -23 17 -20 14 -10 4 -2z" fill="#f0e0f0"/>
<path d="M0 0C8 -4 16 -8 23 -7 23 -2 14 2 3 3z" fill="#e0b8e0"/>
<path d="M0 0C10 2 16 6 18 8 12 10 6 8 0 3z" fill="#f4f0f8"/>
<path d="M0 0C-6 4 -12 8 -17 8 -16 2 -8 -2 -1 -2z" fill="#d86aa8"/><path d="M0 0C-4 -6 -12 -10 -14 -8 -13 -3 -6 0 0 2z" fill="#e8c0e0"/><path d="M0 0C6 -3 14 -1 16 2 12 4 6 3 0 2z" fill="#e090c8"/>
<path d="M-2 -1C-8 -10 -15 -15 -15 -15" stroke="#90c060" stroke-width="1" fill="none"/>
<path d="M-3 -3l-4 -12M0 -3l2 -13M2 -2l9 -9M-1 0l-9 -4" stroke="#c02030" stroke-width="1.3"/>
</g></g>
<rect x="66" y="3" width="10" height="34" fill="#a6a6a6"/>
<rect x="62" y="37" width="14" height="13" fill="#1e1e1e"/>
<rect x="1" y="38" width="61" height="7" fill="#bdbdbd"/>
<rect x="0" y="45.5" width="62" height="4.5" fill="#8a98b0"/>
<g><rect x="4" y="46" width="3" height="3" fill="#5a8ad0"/><rect x="12" y="46" width="3" height="3" fill="#d06040"/><rect x="20" y="46" width="3" height="3" fill="#50a060"/><rect x="28" y="46" width="3" height="3" fill="#e0a040"/><rect x="36" y="46" width="3" height="3" fill="#6070c0"/><rect x="44" y="46" width="3" height="3" fill="#c05080"/><rect x="52" y="46" width="3" height="3" fill="#40a0d0"/></g>
</svg>
<div class="pur" style="left:240px;top:567px;height:49px"></div>
<div class="pur" style="left:258px;top:567px;height:49px;width:1px"></div>
<div class="t" style="left:332px;top:580px;font-size:15px;color:#111;text-shadow:0 1px 0 rgba(255,255,255,.3);width:68px;overflow:hidden;letter-spacing:.1px">Screen Recording</div>
<div class="a" style="left:405px;top:560px;width:2px;height:57px;background:#3c3e44"></div>
<div class="pur" style="left:408px;top:567px;height:49px"></div>
<div class="a" style="left:413px;top:566px;width:2px;height:48px;background:linear-gradient(90deg,#c8ccd4,#6a6e78)"></div>
<div class="a" style="left:424px;top:560px;width:1px;height:57px;background:#3c3e44"></div>
<!-- thumb 4 -->
<svg class="a" style="left:430px;top:564px" width="16" height="50" viewBox="0 0 16 50"><rect width="16" height="50" fill="#5a7040"/><path d="M4 0h12v22C12 20 8 14 4 0z" fill="#eadcf0"/><path d="M0 0h5c2 8 6 16 11 22v6C10 26 4 16 0 6z" fill="#d8b8e0"/><rect x="0" y="18" width="8" height="16" fill="#7a8a40"/><circle cx="4" cy="26" r="3" fill="#d08040"/><path d="M0 50V38c6 0 12 4 16 2v10z" fill="#e8c8e8"/><path d="M16 30v10c-4 2-8 0-12-2 4-2 8-6 12-8z" fill="#f0e8f4"/><path d="M0 44c4-2 8 0 12 2l-2 4H0z" fill="#c878b0"/></svg>
<div class="a" style="left:453px;top:589px;width:2px;height:2px;background:#f4c0e0"></div>

<!-- playhead -->
<div class="a" style="left:102px;top:452px;width:1px;height:170px;background:#e0101c;box-shadow:0 0 0 .4px rgba(240,120,120,.6)"></div>
<svg class="a" style="left:95px;top:440px" width="15" height="15" viewBox="0 0 15 15"><path d="M2.5 1.5h10a1.5 1.5 0 0 1 1.5 1.5v5L7.5 14 1 8V3a1.5 1.5 0 0 1 1.5-1.5z" fill="#9a9a9a" stroke="#2a2a2a"/><path d="M3 3h9v3H3z" fill="#bdbdbd" opacity=".6"/></svg>

<!-- tracks scroller -->
<div class="a" style="left:899px;top:438px;width:15px;height:184px;background:linear-gradient(90deg,#4a4a4a,#5e5e5e 15%,#585858 80%,#4a4a4a);border-left:1px solid #3a3a3a"></div>
<div class="a" style="left:900px;top:444px;width:13px;height:146px;border-radius:7px;background:linear-gradient(90deg,#5a5a5a,#6e6e6e 40%,#5c5c5c)"></div>
<div class="a" style="left:901px;top:474px;width:11px;height:110px;border-radius:6px;background:linear-gradient(90deg,#2e2e2e,#444 50%,#303030);box-shadow:0 0 0 1px #3a3a3a"></div>
<div class="a" style="left:903px;top:596px;border:3.5px solid transparent;border-bottom:6px solid #2a2a2a;border-top:0"></div>
<div class="a" style="left:899px;top:606px;width:15px;height:1px;background:#444"></div>
<div class="a" style="left:903px;top:611px;border:3.5px solid transparent;border-top:6px solid #2a2a2a;border-bottom:0"></div>
<!-- bottom bar -->
<div class="a" style="left:40px;top:622px;width:874px;height:21px;border-radius:0 0 4px 4px;background:linear-gradient(#bababa,#adadad 45%,#9d9d9d)"></div>
<div class="a" style="left:63px;top:630px;width:130px;height:4px;border-radius:2px;background:#4a4a4a"></div>
<div class="a" style="left:72px;top:626px;width:12px;height:12px;border-radius:50%;border:1px solid #777;background:radial-gradient(circle at 50% 30%,#fff,#ddd 60%,#aaa)"></div>
<svg class="a" style="left:47px;top:627px" width="12" height="11" viewBox="0 0 12 11"><circle cx="4.5" cy="4.5" r="3" fill="none" stroke="#444" stroke-width="1.5"/><path d="M6.5 6.5L9.5 9.5" stroke="#444" stroke-width="2"/></svg>
<svg class="a" style="left:197px;top:626px" width="15" height="14" viewBox="0 0 15 14"><circle cx="6" cy="6" r="4.3" fill="none" stroke="#444" stroke-width="1.8"/><path d="M9 9L12.5 12.5" stroke="#444" stroke-width="2.4"/></svg>
<div class="t" style="left:409px;top:628px;font-size:12px;color:#1a1a1a">Duration: 2 mins 28 secs</div>
<svg class="a" style="left:898px;top:627px" width="14" height="13" viewBox="0 0 14 13"><path d="M3 12L13 2M7 12L13 6M11 12L13 10" stroke="#666" stroke-width="1"/><path d="M4 12L13 3M8 12L13 7M12 12L13 11" stroke="#eee" stroke-width=".8"/></svg>
</body></html>
